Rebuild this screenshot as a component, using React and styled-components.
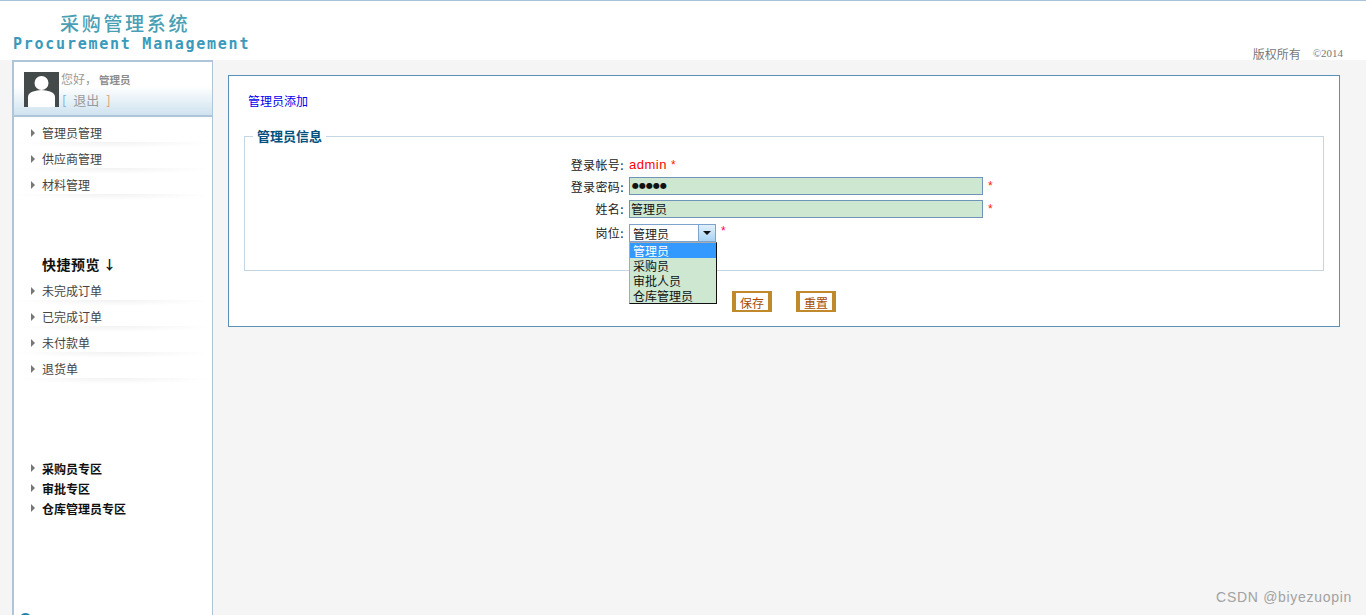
import React from 'react';
import styled, { createGlobalStyle } from 'styled-components';

const cjk = '"Noto Sans CJK SC", "Liberation Sans", sans-serif';

const Global = createGlobalStyle`
  html, body { margin: 0; padding: 0; background: #f5f5f5; }
  body { font-family: ${cjk}; font-size: 12px; overflow: hidden; }
`;

const Page = styled.div`
  width: 1366px;
  height: 615px;
  display: flex;
  flex-direction: column;
  position: relative;
  overflow: hidden;
`;

const Header = styled.div`
  height: 60px;
  box-sizing: border-box;
  background: #fff;
  border-top: 1px solid #a9c2d8;
  display: flex;
  justify-content: space-between;
  align-items: flex-end;
  flex: none;
`;

const Logo = styled.div`
  padding-left: 13px;
  padding-bottom: 8px;
  .cn {
    font-size: 19px;
    font-weight: 500;
    line-height: 20px;
    letter-spacing: 2.7px;
    padding-left: 47px;
    color: #4a9fb4;
    margin-bottom: 3px;
  }
  .en {
    font-family: "DejaVu Sans Mono", monospace;
    font-size: 15px;
    font-weight: 700;
    line-height: 16px;
    letter-spacing: 1.75px;
    color: #3a9abb;
    white-space: nowrap;
  }
`;

const Copyright = styled.div`
  display: flex;
  align-items: center;
  gap: 12px;
  color: #777;
  padding-right: 23px;
  height: 16px;
  margin-bottom: -1px;
  small {
    font-family: "Liberation Serif", serif;
    font-size: 11px;
  }
`;

const Body = styled.div`
  flex: 1;
  display: flex;
  padding-left: 12px;
  min-height: 0;
`;

const Sidebar = styled.div`
  width: 201px;
  box-sizing: border-box;
  background: #fff;
  border-left: 2px solid #afc6da;
  border-top: 2px solid #afc6da;
  border-right: 1px solid #afc6da;
  flex: none;
  position: relative;
  overflow: hidden;
`;

const UserBox = styled.div`
  height: 55px;
  box-sizing: border-box;
  padding: 10px 0 0 10px;
  display: flex;
  gap: 2px;
  background: linear-gradient(#fff 0, #fff 24px, #cfe3f0 100%);
  border-bottom: 2px solid #afc6da;
`;

const Avatar = styled.svg`
  width: 35px;
  height: 35px;
  flex: none;
  display: block;
`;

const UserText = styled.div`
  color: #9a9a9a;
  line-height: 14px;
  b { font-size: 10.5px; margin-left: 2px; color: #8d8d8d; }
  .out { margin-top: 6px; padding-left: 1px; font-size: 13px; word-spacing: 4px; }
  .br { color: #7fb0d0; }
  .br2 { color: #d8a070; }
`;

const NavList = styled.div`
  display: flex;
  flex-direction: column;
  margin-top: ${p => p.$top}px;
`;

const NavItem = styled.div`
  height: 26px;
  box-sizing: border-box;
  display: flex;
  align-items: center;
  gap: 7px;
  padding: 0 0 5px 17px;
  color: #444;
  background: radial-gradient(ellipse 50% 100% at 50% 0, #f2f2f2 0, #fff 100%) no-repeat 0 100% / 100% 6px;
`;

const Arrow = styled.i`
  width: 0;
  height: 0;
  border-left: 4px solid #777;
  border-top: 4px solid transparent;
  border-bottom: 4px solid transparent;
`;

const QuickTitle = styled.div`
  margin: 55px 0 0 28px;
  height: 18px;
  font-size: 14px;
  font-weight: 700;
  letter-spacing: 0.5px;
  line-height: 18px;
  color: #111;
  display: flex;
  align-items: center;
  span { font-size: 13px; margin-left: 3px; }
`;

const ZoneItem = styled.div`
  height: 20px;
  display: flex;
  align-items: center;
  gap: 7px;
  padding-left: 17px;
  color: #111;
  font-weight: 700;
`;

const Corner = styled.div`
  position: absolute;
  left: 5px;
  bottom: -11px;
  width: 13px;
  height: 13px;
  border-radius: 50%;
  background: #1f7fa8;
`;

const Main = styled.div`
  flex: 1;
  padding: 15px 26px 0 15px;
  min-width: 0;
`;

const Card = styled.div`
  height: 252px;
  box-sizing: border-box;
  background: #fff;
  border: 1px solid #5a8fb8;
  padding: 16px 15px 0;
`;

const PageTitle = styled.div`
  color: #0000ee;
  line-height: 18px;
  padding-left: 4px;
`;

const Fieldset = styled.fieldset`
  margin: 17px 0 0;
  padding: 0;
  height: 142px;
  box-sizing: content-box;
  border: 1px solid #c5d6e2;
  position: relative;
  min-width: 0;
  legend {
    margin-left: 8px;
    padding: 0 4px;
    font-size: 13px;
    line-height: 18px;
    font-weight: 700;
    color: #00507f;
  }
`;

const FormRows = styled.div`
  display: flex;
  flex-direction: column;
  margin-top: 9px;
`;

const Row = styled.div`
  height: ${p => p.$h}px;
  display: grid;
  grid-template-columns: 379px 354px auto;
  column-gap: 5px;
  align-items: center;
  color: #222;
  label { text-align: right; letter-spacing: 0.4px; }
`;

const Star = styled.span`
  color: ${p => p.$pink ? '#ff0066' : '#ff2200'};
  font-size: 12px;
  font-family: "Liberation Sans", sans-serif;
  margin-left: ${p => p.$gap || 0}px;
`;

const AdminName = styled.span`
  color: #f00;
  font-family: "Liberation Sans", sans-serif;
  font-size: 13px;
  grid-column: 2 / 4;
  letter-spacing: 0.5px;
`;

const TextInput = styled.div`
  height: 18px;
  box-sizing: border-box;
  background: #cde7d0;
  border: 1px solid #6f94b8;
  padding-left: ${p => p.$pwd ? '2px' : '1px'};
  line-height: 16px;
  color: #111;
  font-size: ${p => p.$pwd ? '8px' : '12px'};
  font-family: ${p => p.$pwd ? '"DejaVu Sans", sans-serif' : 'inherit'};
`;

const SelectCell = styled.div`
  display: flex;
  align-items: flex-start;
  align-self: start;
  margin-top: 4px;
`;

const SelectWrap = styled.div`
  position: relative;
  width: 87px;
  height: 18px;
  box-sizing: border-box;
  border: 1px solid #7da2ce;
  background: #fff;
  display: flex;
  align-items: center;
  justify-content: space-between;
  padding-left: 3px;
`;

const SelectBtn = styled.div`
  width: 17px;
  height: 16px;
  box-sizing: border-box;
  border-left: 1px solid #7da2ce;
  background: linear-gradient(#e1f0fb, #a9d3f3);
  display: flex;
  align-items: center;
  justify-content: center;
  &::after {
    content: "";
    border-top: 4px solid #111;
    border-left: 4px solid transparent;
    border-right: 4px solid transparent;
  }
`;

const Dropdown = styled.div`
  position: absolute;
  left: 0;
  top: 17px;
  width: 88px;
  height: 62px;
  box-sizing: border-box;
  background: #cde7d0;
  border: 1px solid #111;
  border-left-color: #aaa;
  border-top-color: #aaa;
  z-index: 2;
  margin-left: -1px;
`;

const Option = styled.div`
  height: 15px;
  line-height: 15px;
  padding-left: 3px;
  color: ${p => p.$on ? '#fff' : '#111'};
  background: ${p => p.$on ? '#3399ff' : 'transparent'};
`;

const Actions = styled.div`
  display: flex;
  gap: 24px;
  margin-top: 20px;
  padding-left: 488px;
`;

const Btn = styled.div`
  width: 40px;
  height: 21px;
  box-sizing: border-box;
  border-left: 4px solid #c08a2c;
  border-right: 4px solid #c08a2c;
  border-top: 2px solid #c08a2c;
  border-bottom: 2px solid #c08a2c;
  background: #fff;
  color: #a84a00;
  font-size: 12px;
  line-height: 20px;
  text-align: center;
`;

const Watermark = styled.div`
  position: absolute;
  right: 14px;
  bottom: 10px;
  font-family: "Liberation Sans", sans-serif;
  font-size: 14px;
  letter-spacing: 0.7px;
  color: #a2a2a2;
`;

const topNav = ['管理员管理', '供应商管理', '材料管理'];
const quickNav = ['未完成订单', '已完成订单', '未付款单', '退货单'];
const zones = ['采购员专区', '审批专区', '仓库管理员专区'];
const roles = ['管理员', '采购员', '审批人员', '仓库管理员'];

export default function App() {
  return (
    <Page>
      <Global />
      <Header>
        <Logo>
          <div className="cn">采购管理系统</div>
          <div className="en">Procurement Management</div>
        </Logo>
        <Copyright>
          <span>版权所有</span>
          <small>©2014</small>
        </Copyright>
      </Header>
      <Body>
        <Sidebar>
          <UserBox>
            <Avatar viewBox="0 0 35 35">
              <rect width="35" height="35" fill="#44494a" />
              <circle cx="17.500" cy="11" r="7" fill="#fff" />
              <path d="M4 35V25q0-4 5-5.500 4-1.500 8.500-1.500t8.500 1.500q5 1.500 5 5.500V35z" fill="#fff" />
            </Avatar>
            <UserText>
              <div>您好，<b>管理员</b></div>
              <div className="out"><span className="br">[</span> 退出 <span className="br2">]</span></div>
            </UserText>
          </UserBox>
          <NavList $top={5}>
            {topNav.map(t => <NavItem key={t}><Arrow />{t}</NavItem>)}
          </NavList>
          <QuickTitle>快捷预览<span>↓</span></QuickTitle>
          <NavList $top={7}>
            {quickNav.map(t => <NavItem key={t}><Arrow />{t}</NavItem>)}
          </NavList>
          <NavList $top={74}>
            {zones.map(t => <ZoneItem key={t}><Arrow />{t}</ZoneItem>)}
          </NavList>
          <Corner />
        </Sidebar>
        <Main>
          <Card>
            <PageTitle>管理员添加</PageTitle>
            <Fieldset>
              <legend>管理员信息</legend>
              <FormRows>
                <Row $h={21}>
                  <label>登录帐号:</label>
                  <AdminName>admin <Star>*</Star></AdminName>
                </Row>
                <Row $h={22}>
                  <label>登录密码:</label>
                  <TextInput $pwd>●●●●●</TextInput>
                  <Star>*</Star>
                </Row>
                <Row $h={23}>
                  <label>姓名:</label>
                  <TextInput>管理员</TextInput>
                  <Star>*</Star>
                </Row>
                <Row $h={24}>
                  <label>岗位:</label>
                  <SelectCell>
                    <SelectWrap>
                      管理员
                      <SelectBtn />
                      <Dropdown>
                        {roles.map((r, i) => <Option key={r} $on={i === 0}>{r}</Option>)}
                      </Dropdown>
                    </SelectWrap>
                    <Star $pink $gap={5}>*</Star>
                  </SelectCell>
                </Row>
              </FormRows>
            </Fieldset>
            <Actions>
              <Btn>保存</Btn>
              <Btn>重置</Btn>
            </Actions>
          </Card>
        </Main>
      </Body>
      <Watermark>CSDN @biyezuopin</Watermark>
    </Page>
  );
}
